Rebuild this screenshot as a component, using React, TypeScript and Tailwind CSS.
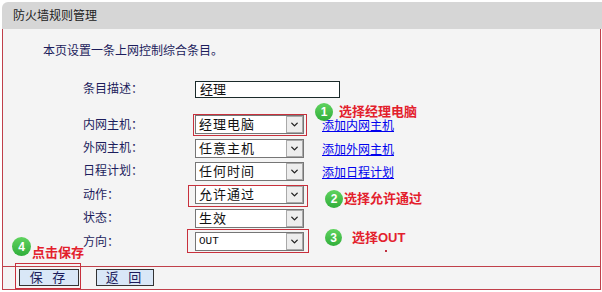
import React from 'react';
import { ChevronDown } from 'lucide-react';

const FakeSelect = ({ value, mono = false }: { value: string; mono?: boolean }) => (
  <div className="w-[109px] h-[19px] bg-white border border-[#767676] flex items-center">
    <span
      className={`flex-1 pl-[3px] leading-none text-[#111] ${
        mono ? "font-['Liberation_Mono',monospace] text-[11px]" : 'text-[13px] tracking-[1px]'
      }`}
    >
      {value}
    </span>
    <span className="w-[17px] h-[17px] border border-[#a9a9a9] bg-[#ededed] flex items-center justify-center text-[#222]">
      <ChevronDown size={11} strokeWidth={3} />
    </span>
  </div>
);

const Step = ({ n, className }: { n: number; className: string }) => (
  <div
    className={`absolute rounded-full bg-gradient-to-b from-[#5fd35f] to-[#2fae3a] text-white font-bold text-[12px] leading-none flex items-center justify-center font-['Liberation_Sans',sans-serif] ${className}`}
  >
    {n}
  </div>
);

const rows = [
  { label: '内网主机：', value: '经理电脑', link: '添加内网主机' },
  { label: '外网主机：', value: '任意主机', link: '添加外网主机' },
  { label: '日程计划：', value: '任何时间', link: '添加日程计划' },
  { label: '动作：', value: '允许通过' },
  { label: '状态：', value: '生效' },
  { label: '方向：', value: 'OUT', mono: true },
];

export default function App() {
  return (
    <div className="relative w-[602px] h-[292px] bg-white overflow-hidden font-['Liberation_Sans','Noto_Sans_CJK_SC',sans-serif]">
      <div className="pt-[2px] pl-[2px]">
        <div className="h-[27px] bg-[#d6d6d6] rounded-tl-[6px] flex items-center pl-[11px] text-[12px] text-[#222]">
          防火墙规则管理
        </div>
        <div className="mr-[1px] border-x border-[#c0404a] bg-[#f4f4f4]">
          <div className="h-[237px] pt-[14px]">
            <p className="pl-[40px] text-[12px] leading-[16px] text-[#1c1c5c]">本页设置一条上网控制综合条目。</p>

            <div className="mt-[21px] pl-[80px] grid grid-cols-[112px_127px_auto] items-center h-[17px]">
              <span className="text-[12px] text-[#1c1c5c]">条目描述：</span>
              <div className="col-span-2 w-[145px] h-[17px] bg-white border border-[#1a2a2a] flex items-center pl-[4px] text-[13px] text-[#111] leading-none">
                经理
              </div>
            </div>

            <div className="mt-[16px] pl-[80px]">
              {rows.map((r) => (
                <div key={r.label} className="grid grid-cols-[112px_127px_auto] items-center h-[23.4px]">
                  <span className="text-[12px] text-[#1c1c5c]">{r.label}</span>
                  <FakeSelect value={r.value} mono={r.mono} />
                  {r.link ? (
                    <a className="text-[12px] text-[#0000ee] underline mt-[3px] cursor-pointer">{r.link}</a>
                  ) : (
                    <span />
                  )}
                </div>
              ))}
            </div>
          </div>

          <div className="h-[24px] border-y border-[#c0404a] pt-[2px] pl-[16px] flex items-start gap-[17px]">
            <button className="w-[60px] h-[17px] bg-[#d9e7f7] border border-[#333] text-[13px] text-[#1c1c5c] leading-none tracking-[3px]">
              保 存
            </button>
            <button className="w-[58px] h-[17px] bg-[#d9e7f7] border border-[#333] text-[13px] text-[#1c1c5c] leading-none tracking-[3px]">
              返 回
            </button>
          </div>
        </div>
      </div>

      {/* annotation overlays */}
      <div className="absolute left-[193px] top-[114px] w-[114px] h-[22px] border border-[#c8303c]" />
      <div className="absolute left-[188px] top-[185px] w-[120px] h-[22px] border border-[#c8303c]" />
      <div className="absolute left-[187px] top-[229px] w-[122px] h-[24px] border border-[#c8303c]" />
      <div className="absolute left-[15px] top-[263px] w-[66px] h-[26px] border border-[#c8303c]" />

      <Step n={1} className="left-[315px] top-[103px] w-[18px] h-[18px]" />
      <span className="absolute left-[339px] top-[104px] text-[13px] leading-[16px] font-bold text-[#e3202c]">选择经理电脑</span>

      <Step n={2} className="left-[325px] top-[190px] w-[18px] h-[18px]" />
      <span className="absolute left-[344px] top-[191px] text-[13px] leading-[16px] font-bold text-[#e3202c]">选择允许通过</span>

      <Step n={3} className="left-[325px] top-[229px] w-[17px] h-[17px]" />
      <span className="absolute left-[352px] top-[230px] text-[13px] leading-[16px] font-bold text-[#e3202c]">选择OUT</span>
      <span className="absolute left-[385px] top-[250px] w-[2px] h-[2px] bg-[#c03040]" />

      <Step n={4} className="left-[12px] top-[237px] w-[19px] h-[19px]" />
      <span className="absolute left-[32px] top-[245px] text-[13px] leading-[16px] font-bold text-[#e3202c]">点击保存</span>
    </div>
  );
}
